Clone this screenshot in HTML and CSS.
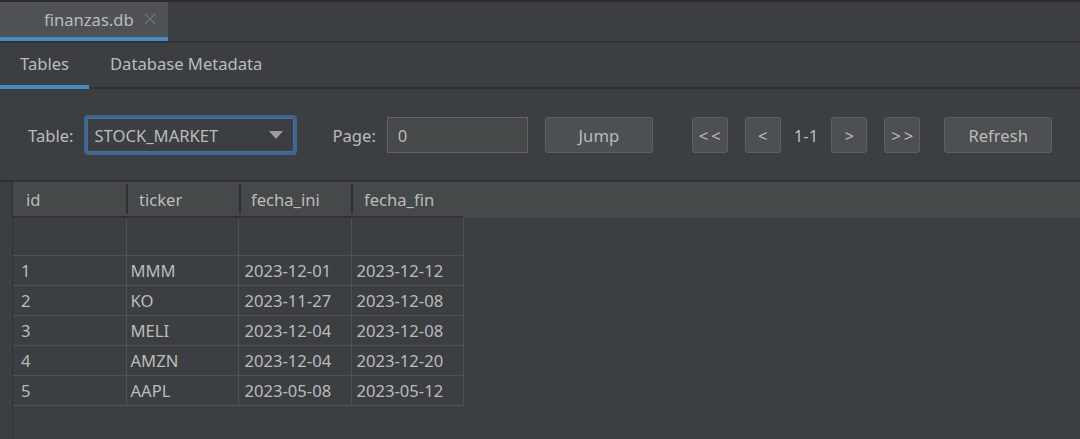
FILE: index.html
```html
<!DOCTYPE html>
<html>
<head>
<meta charset="utf-8">
<link rel="stylesheet" href="styles.css">
</head>
<body>
<div class="app">
  <div class="filetabs">
    <div class="filetab">
      <span class="filetab-name">finanzas.db</span>
      <svg class="close" width="12" height="12" viewBox="0 0 12 12"><path d="M1 1L11 11M11 1L1 11" stroke="#6e7173" stroke-width="1.4"/></svg>
    </div>
    <div class="filetabs-rest"></div>
  </div>
  <div class="subtabs">
    <div class="subtab active">Tables</div>
    <div class="subtab">Database Metadata</div>
    <div class="subtabs-rest"></div>
  </div>
  <div class="toolbar">
    <span class="label">Table:</span>
    <div class="combo">
      <span>STOCK_MARKET</span>
      <svg width="14" height="8" viewBox="0 0 14 8"><path d="M0 0H14L7 8Z" fill="#9a9c9e"/></svg>
    </div>
    <span class="label page-label">Page:</span>
    <div class="input">0</div>
    <div class="btn btn-wide">Jump</div>
    <div class="nav">
      <div class="btn btn-sq dbl">&lt;&lt;</div>
      <div class="btn btn-sq">&lt;</div>
      <span class="pageinfo">1-1</span>
      <div class="btn btn-sq">&gt;</div>
      <div class="btn btn-sq dbl">&gt;&gt;</div>
    </div>
    <div class="btn btn-wide refresh">Refresh</div>
  </div>
  <div class="tablearea">
    <div class="grid">
      <div class="hrow">
        <div class="hcell">id</div>
        <div class="hcell">ticker</div>
        <div class="hcell">fecha_ini</div>
        <div class="hcell last">fecha_fin</div>
        <div class="hfill"></div>
      </div>
      <div class="body">
        <table class="data">
          <tr class="filter"><td></td><td></td><td></td><td></td></tr>
          <tr><td>1</td><td>MMM</td><td>2023-12-01</td><td>2023-12-12</td></tr>
          <tr><td>2</td><td>KO</td><td>2023-11-27</td><td>2023-12-08</td></tr>
          <tr><td>3</td><td>MELI</td><td>2023-12-04</td><td>2023-12-08</td></tr>
          <tr><td>4</td><td>AMZN</td><td>2023-12-04</td><td>2023-12-20</td></tr>
          <tr><td>5</td><td>AAPL</td><td>2023-05-08</td><td>2023-05-12</td></tr>
        </table>
      </div>
    </div>
  </div>
</div>
</body>
</html>
```
FILE: styles.css
```css
* { box-sizing: border-box; }
html, body { margin: 0; padding: 0; }
body {
  background: #3c3f41;
  color: #bbbbbb;
  font-family: "Noto Sans", "Open Sans", sans-serif;
  font-size: 16.6px;
  width: 1080px;
  height: 439px;
  overflow: hidden;
}
.app { display: flex; flex-direction: column; height: 439px; border-top: 2px solid #2b2b2b; }

.filetabs { display: flex; height: 41px; border-bottom: 2px solid #2f3133; }
.filetab {
  width: 168px;
  background: #4e5254;
  border-bottom: 4px solid #4a88c7;
  display: flex;
  align-items: center;
  padding-left: 44px;
  gap: 10px;
}
.filetab-name { font-size: 16.6px; color: #bbbbbb; }
.close { margin-top: -2px; }
.filetabs-rest { flex: 1; }

.subtabs { display: flex; height: 46px; }
.subtab {
  display: flex; align-items: center;
  height: 100%;
  border-bottom: 2px solid #2f3133;
  padding-bottom: 3px;
}
.subtab.active { border-bottom: 4px solid #4a88c7; padding-bottom: 1px; width: 89px; justify-content: center; }
.subtab:not(.active) { padding-left: 21px; padding-right: 20px; }
.subtabs-rest { flex: 1; border-bottom: 2px solid #2f3133; }

.toolbar {
  height: 91px;
  display: flex;
  align-items: center;
  padding-left: 28px;
  padding-top: 1px;
}
.label { margin-right: 10px; }
.combo {
  width: 213px; height: 40px;
  border: 3px solid #3f6590;
  border-radius: 4px;
  background: #3c3f41;
  display: flex; align-items: center; justify-content: space-between;
  padding: 0 11px 0 8px;
  box-shadow: inset 0 0 0 1px #4d6d95;
}
.page-label { margin-left: 36px; margin-right: 11px; }
.input {
  width: 141px; height: 36px;
  background: #45494a;
  border: 1px solid #646464;
  padding-left: 10px;
  display: flex; align-items: center;
}
.btn {
  height: 36px;
  background: #4c5052;
  border: 1px solid #5e6060;
  border-radius: 3px;
  display: flex; align-items: center; justify-content: center;
}
.btn-wide { width: 108px; margin-left: 17px; }
.btn-sq { width: 36px; }
.btn-sq.dbl { letter-spacing: 3px; padding-left: 3px; }
.nav { display: flex; align-items: center; gap: 17px; margin-left: 39px; }
.pageinfo { margin: 0 -4px; }
.refresh { margin-left: 24px; }

.tablearea {
  flex: 1;
  border-top: 2px solid #2f3133;
  padding-left: 12px;
  min-height: 0;
}
.grid { height: 100%; border-left: 1px solid #2f3133; display: flex; flex-direction: column; }
.hrow { display: flex; height: 36px; background: #45494a; }
.hcell {
  display: flex; align-items: center;
  border-bottom: 2px solid #323232;
  position: relative;
}
.hcell::after {
  content: "";
  position: absolute;
  right: 0; top: 2px; bottom: 2px;
  width: 2px;
  background: #2f3133;
}
.hcell:nth-child(1) { width: 115px; padding-left: 13px; }
.hcell:nth-child(2) { width: 113px; padding-left: 11px; }
.hcell:nth-child(3) { width: 112px; padding-left: 10px; }
.hcell.last { width: 110px; padding-left: 11px; }
.hcell.last::after { display: none; }
.hfill { flex: 1; }

.body { flex: 1; background: #3c3f41; }
.data { border-collapse: collapse; }
.data td {
  border: 1px solid #4e5254;
  height: 30px;
  white-space: nowrap;
  color: #bbbbbb;
}
.data td:nth-child(1) { width: 113px; padding-left: 8px; }
.data td:nth-child(2) { width: 112px; padding-left: 4px; }
.data td:nth-child(3) { width: 113px; padding-left: 6px; }
.data td:nth-child(4) { width: 112px; padding-left: 5px; }
.data tr:first-child td { border-top: none; }
.data td:first-child { border-left: none; }
.data tr.filter td { height: 37px; }
```
